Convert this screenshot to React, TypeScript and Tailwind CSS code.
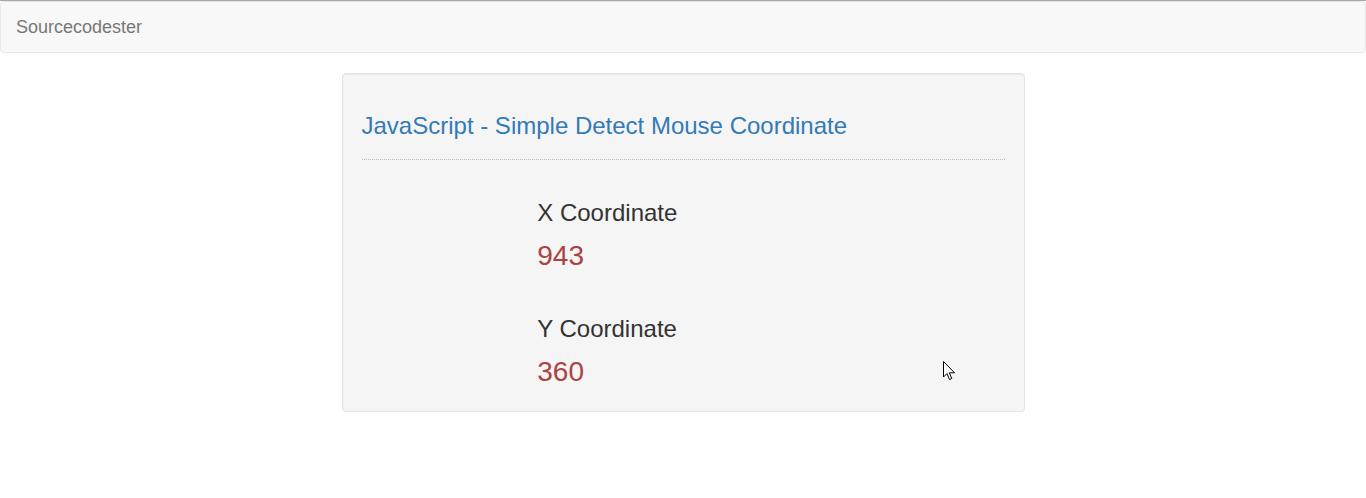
export default function App() {
  return (
    <div
      className="relative min-h-[498px] bg-white text-[#333]"
      style={{ fontFamily: '"Liberation Sans", Arial, sans-serif' }}
    >
      {/* Top edge */}
      <div className="h-px bg-[#a8a8a8]" />

      {/* Navbar */}
      <nav className="flex h-[52px] items-center rounded-[4px] border border-[#e7e7e7] bg-[#f8f8f8] px-[15px]">
        <span className="text-[18px] leading-5 text-[#777]">Sourcecodester</span>
      </nav>

      {/* Well */}
      <div className="mt-5 flex">
        <div className="ml-[25%] w-1/2 rounded-[4px] border border-[#e3e3e3] bg-[#f5f5f5] px-[19px] pt-[19px] pb-[23px] shadow-[inset_0_1px_1px_rgba(0,0,0,0.05)]">
          <h3 className="mt-5 text-[24px] leading-[26px] text-[#337ab7]">
            JavaScript - Simple Detect Mouse Coordinate
          </h3>
          <hr className="mt-5 mb-5 border-0 border-t border-dotted border-[#bbb]" />
          <div className="ml-[25%] pl-[15px]">
            <h3 className="pt-5 text-[24px] leading-[26px]">X Coordinate</h3>
            <div className="mt-[14px] text-[28px] leading-8 text-[#a94442]">943</div>
            <h3 className="mt-[44px] text-[24px] leading-[26px]">Y Coordinate</h3>
            <div className="mt-[14px] text-[28px] leading-8 text-[#a94442]">360</div>
          </div>
        </div>
      </div>

      {/* Mouse pointer captured in the screenshot */}
      <svg
        className="absolute left-[943px] top-[361px]"
        width="13"
        height="20"
        viewBox="0 0 13 20"
      >
        <path
          d="M0.5 0.5 L0.5 16 L4 12.5 L6.5 18.5 L8.8 17.5 L6.3 11.8 L11.5 11.8 Z"
          fill="#fff"
          stroke="#000"
          strokeWidth="1"
          strokeLinejoin="miter"
        />
      </svg>
    </div>
  );
}
